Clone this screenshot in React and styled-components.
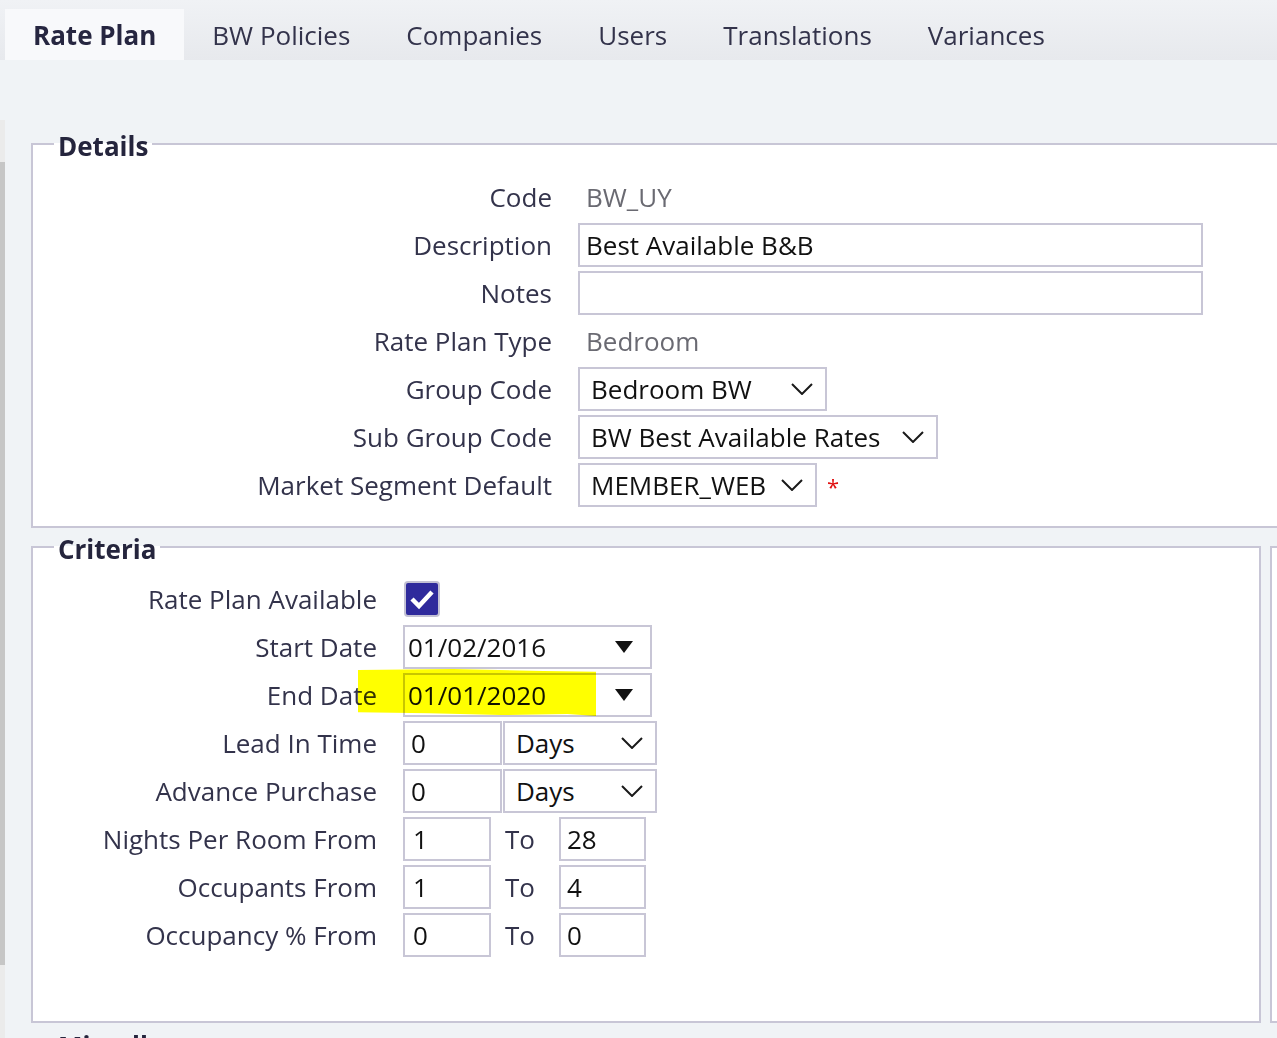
import React from "react";
import styled, { createGlobalStyle } from "styled-components";

const GlobalStyle = createGlobalStyle`
  html, body {
    margin: 0;
    padding: 0;
    overflow: hidden;
    background: #f0f3f6;
  }
  body {
    font-family: "Open Sans", "Noto Sans", sans-serif;
    color: #30304a;
  }
`;

const Page = styled.div`
  width: 1277px;
  height: 1038px;
  overflow: hidden;
  display: flex;
  flex-direction: column;
`;

const TabBar = styled.div`
  height: 60px;
  flex: 0 0 60px;
  display: flex;
  align-items: flex-end;
  padding-left: 5px;
  background: linear-gradient(#f0f2f5, #e7e9ed);
`;

const Tab = styled.div`
  height: 51px;
  padding: 0 28px;
  display: flex;
  align-items: center;
  font-size: 26px;
  font-weight: ${(p) => (p.$active ? 700 : 400)};
  color: ${(p) => (p.$active ? "#262640" : "#33334b")};
  background: ${(p) => (p.$active ? "#f8f9fb" : "transparent")};
`;

const Body = styled.div`
  flex: 1;
  display: grid;
  grid-template-columns: 5px 1fr;
  min-height: 0;
`;

const Rail = styled.div`
  margin-top: 60px;
  background: #ebebeb;
  display: flex;
  flex-direction: column;
`;

const Thumb = styled.div`
  margin-top: 42px;
  height: 803px;
  background: #c6c6c6;
`;

const Content = styled.div`
  padding: 65px 0 0 26px;
  display: flex;
  flex-direction: column;
  gap: 2px;
  min-width: 0;
`;

const Fieldset = styled.fieldset`
  box-sizing: border-box;
  margin: 0 ${(p) => p.$bleed || 0}px 0 0;
  padding: ${(p) => p.$pad || "0"};
  border: 2px solid #c8c6d6;
  background: #ffffff;
  min-width: 0;
  flex: ${(p) => p.$flex || "none"};
`;

const Legend = styled.legend`
  margin-left: 21px;
  padding: 6px 4px 0;
  font-size: 26px;
  line-height: 31px;
  font-weight: 700;
  color: #25253d;
`;

const SplitRow = styled.div`
  display: flex;
  gap: 9px;
  margin-top: -2px;
  margin-right: -40px;
`;

const FormGrid = styled.div`
  display: grid;
  grid-template-columns: ${(p) => p.$labelWidth}px 1fr;
  column-gap: 26px;
  row-gap: 4px;
  grid-auto-rows: 44px;
  align-items: center;
`;

const Label = styled.div`
  text-align: right;
  font-size: 26px;
  color: #33334b;
  white-space: nowrap;
`;

const Control = styled.div`
  position: relative;
  display: flex;
  align-items: center;
  height: 44px;
`;

const ReadOnly = styled.div`
  padding-left: 8px;
  font-size: 26px;
  color: #6a6a72;
`;

const TextBox = styled.input`
  box-sizing: border-box;
  width: ${(p) => p.$width}px;
  height: 44px;
  margin: 0;
  padding: 0 0 0 ${(p) => p.$pad ?? 6}px;
  border: 2px solid #c8c6d6;
  border-radius: 0;
  background: #ffffff;
  font-family: inherit;
  font-size: 26px;
  color: #111111;
  outline: none;
`;

const SelectBox = styled.div`
  box-sizing: border-box;
  width: ${(p) => p.$width}px;
  height: 44px;
  margin-left: ${(p) => p.$gap || 0}px;
  padding: 0 ${(p) => p.$right ?? 12}px 0 ${(p) => p.$pad ?? 11}px;
  border: 2px solid #c8c6d6;
  background: #ffffff;
  display: flex;
  align-items: center;
  justify-content: space-between;
  font-size: 26px;
  color: #111111;
  white-space: nowrap;
`;

const Required = styled.span`
  margin-left: 10px;
  color: #e01010;
  font-size: 22px;
  align-self: flex-start;
  margin-top: 8px;
`;

const Check = styled.div`
  box-sizing: border-box;
  width: 36px;
  height: 36px;
  margin-left: 1px;
  border: 2px solid #c3c1d4;
  border-radius: 4px;
  background: #2f2a9c;
  display: flex;
  align-items: center;
  justify-content: center;
`;

const ToText = styled.span`
  width: 68px;
  padding-left: 14px;
  box-sizing: border-box;
  font-size: 26px;
  color: #33334b;
`;

const Highlight = styled.div`
  position: absolute;
  left: -45px;
  top: -4px;
  width: 238px;
  height: 47px;
  background: #ffff00;
  mix-blend-mode: multiply;
  pointer-events: none;
  clip-path: polygon(0 2%, 40% 0, 78% 4%, 100% 6%, 100% 100%, 88% 96%, 60% 98%, 30% 94%, 0 92%);
`;

const Chevron = () => (
  <svg width="22" height="12" viewBox="0 0 22 12">
    <polyline points="1,1 11,11 21,1" fill="none" stroke="#1a1a1a" strokeWidth="2" />
  </svg>
);

const Caret = () => (
  <svg width="18" height="12" viewBox="0 0 18 12">
    <polygon points="0,0 18,0 9,12" fill="#111" />
  </svg>
);

const tabs = ["Rate Plan", "BW Policies", "Companies", "Users", "Translations", "Variances"];

const ranges = [
  { label: "Nights Per Room From", from: "1", to: "28" },
  { label: "Occupants From", from: "1", to: "4" },
  { label: "Occupancy % From", from: "0", to: "0" },
];

const DateField = ({ value, highlight }) => (
  <Control>
    <SelectBox $width={249} $pad={3} $right={17}>
      <span>{value}</span>
      <Caret />
    </SelectBox>
    {highlight && <Highlight />}
  </Control>
);

const AmountField = ({ value }) => (
  <Control>
    <TextBox $width={99} $pad={6} defaultValue={value} readOnly />
    <SelectBox $width={154} $gap={1} $right={12}>
      <span>Days</span>
      <Chevron />
    </SelectBox>
  </Control>
);

export default function App() {
  return (
    <Page>
      <GlobalStyle />
      <TabBar>
        {tabs.map((t, i) => (
          <Tab key={t} $active={i === 0}>
            {t}
          </Tab>
        ))}
      </TabBar>
      <Body>
        <Rail>
          <Thumb />
        </Rail>
        <Content>
          <Fieldset $bleed={-40} $pad="13px 0 19px 0">
            <Legend>Details</Legend>
            <FormGrid $labelWidth={519}>
              <Label>Code</Label>
              <Control>
                <ReadOnly>BW_UY</ReadOnly>
              </Control>
              <Label>Description</Label>
              <Control>
                <TextBox $width={625} $pad={6} defaultValue="Best Available B&B" readOnly />
              </Control>
              <Label>Notes</Label>
              <Control>
                <TextBox $width={625} defaultValue="" readOnly />
              </Control>
              <Label>Rate Plan Type</Label>
              <Control>
                <ReadOnly>Bedroom</ReadOnly>
              </Control>
              <Label>Group Code</Label>
              <Control>
                <SelectBox $width={249}>
                  <span>Bedroom BW</span>
                  <Chevron />
                </SelectBox>
              </Control>
              <Label>Sub Group Code</Label>
              <Control>
                <SelectBox $width={360}>
                  <span>BW Best Available Rates</span>
                  <Chevron />
                </SelectBox>
              </Control>
              <Label>Market Segment Default</Label>
              <Control>
                <SelectBox $width={239} $right={12}>
                  <span>MEMBER_WEB</span>
                  <Chevron />
                </SelectBox>
                <Required>*</Required>
              </Control>
            </FormGrid>
          </Fieldset>

          <SplitRow>
            <Fieldset $flex="0 0 1230px" $pad="12px 0 64px 0">
              <Legend>Criteria</Legend>
              <FormGrid $labelWidth={344}>
                <Label>Rate Plan Available</Label>
                <Control>
                  <Check>
                    <svg width="26" height="22" viewBox="0 0 26 22">
                      <polyline points="3,11 10,18 23,4" fill="none" stroke="#fff" strokeWidth="4.5" />
                    </svg>
                  </Check>
                </Control>
                <Label>Start Date</Label>
                <DateField value="01/02/2016" />
                <Label>End Date</Label>
                <DateField value="01/01/2020" highlight />
                <Label>Lead In Time</Label>
                <AmountField value="0" />
                <Label>Advance Purchase</Label>
                <AmountField value="0" />
                {ranges.map((r) => (
                  <React.Fragment key={r.label}>
                    <Label>{r.label}</Label>
                    <Control>
                      <TextBox $width={88} $pad={8} defaultValue={r.from} readOnly />
                      <ToText>To</ToText>
                      <TextBox $width={87} $pad={6} defaultValue={r.to} readOnly />
                    </Control>
                  </React.Fragment>
                ))}
              </FormGrid>
            </Fieldset>
            <Fieldset $flex="1" $pad="12px 0 64px 0">
              <Legend>&nbsp;</Legend>
            </Fieldset>
          </SplitRow>

          <Fieldset $bleed={-40} $pad="12px 0 40px 0">
            <Legend>Miscellaneous</Legend>
          </Fieldset>
        </Content>
      </Body>
    </Page>
  );
}
